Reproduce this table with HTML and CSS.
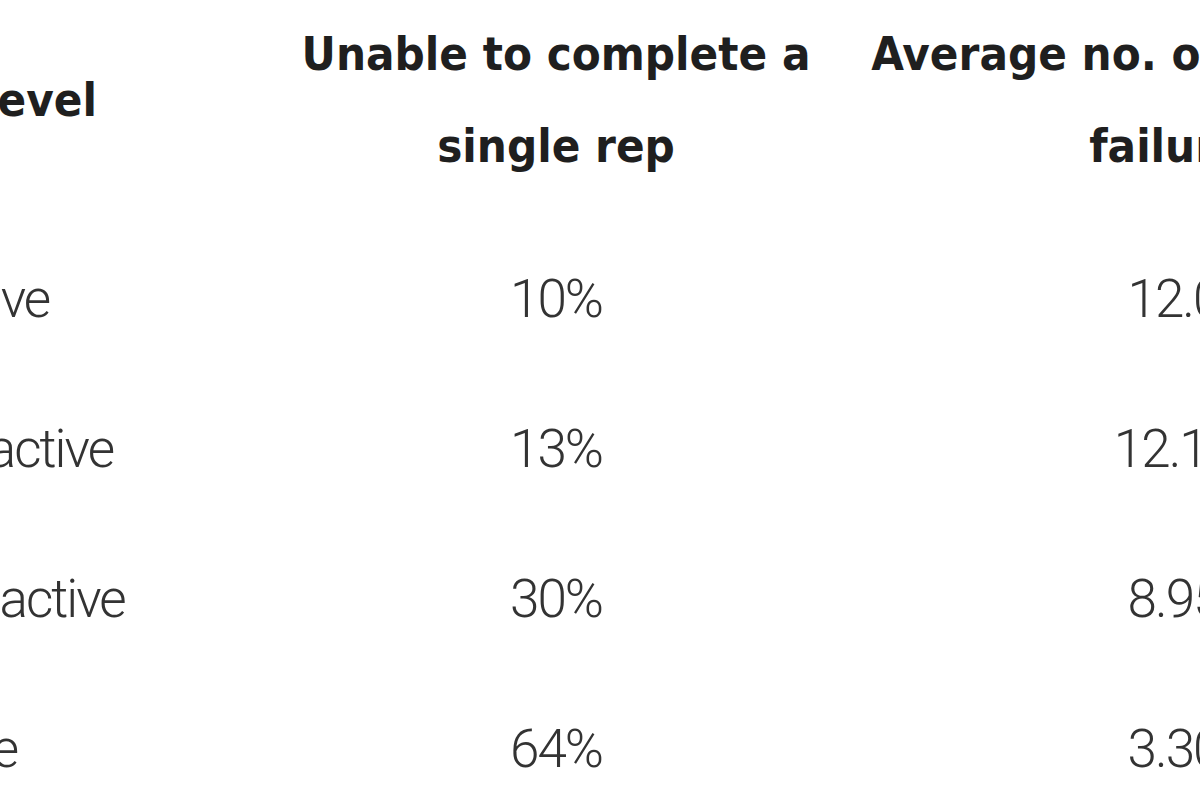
FILE: index.html
```html
<!DOCTYPE html>
<html lang="en">
<head>
<meta charset="utf-8">
<title>Activity table</title>
<link rel="stylesheet" href="styles.css">
</head>
<body>
<div class="table">
  <div class="th th-label">Activity level</div>
  <div class="th">Unable to complete a<br>single rep</div>
  <div class="th th-avg">Average no. of reps until<br>failure</div>

  <div class="td td-label">Highly active</div>
  <div class="td">10%</div>
  <div class="td">12.0</div>

  <div class="td td-label">Regularly active</div>
  <div class="td">13%</div>
  <div class="td">12.13</div>

  <div class="td td-label">Irregularly active</div>
  <div class="td">30%</div>
  <div class="td">8.95</div>

  <div class="td td-label">Less active</div>
  <div class="td">64%</div>
  <div class="td">3.30</div>
</div>
</body>
</html>
```

FILE: styles.css
```css
html, body {
  margin: 0;
  padding: 0;
  background: #ffffff;
  overflow: hidden;
  width: 1200px;
  height: 800px;
}

.table {
  display: grid;
  grid-template-columns: 467px 618px 618px;
  margin-left: -220px;
  width: 1703px;
}

.th {
  font-family: "DejaVu Sans Condensed", "DejaVu Sans", sans-serif;
  font-weight: bold;
  font-size: 47px;
  line-height: 92px;
  color: #1f1f1f;
  text-align: center;
  white-space: nowrap;
  padding-top: 8px;
  padding-bottom: 32px;
}

.th-label {
  text-align: left;
  align-self: center;
  padding-top: 0;
  padding-bottom: 24px;
  padding-left: 6px;
}

.th-avg {
  padding-right: 14px;
}

.td {
  font-family: Roboto, "Liberation Sans", sans-serif;
  font-weight: 300;
  font-size: 53px;
  letter-spacing: -2px;
  line-height: 150px;
  color: #333333;
  text-align: center;
  white-space: nowrap;
}

.td-label {
  text-align: left;
}
```
